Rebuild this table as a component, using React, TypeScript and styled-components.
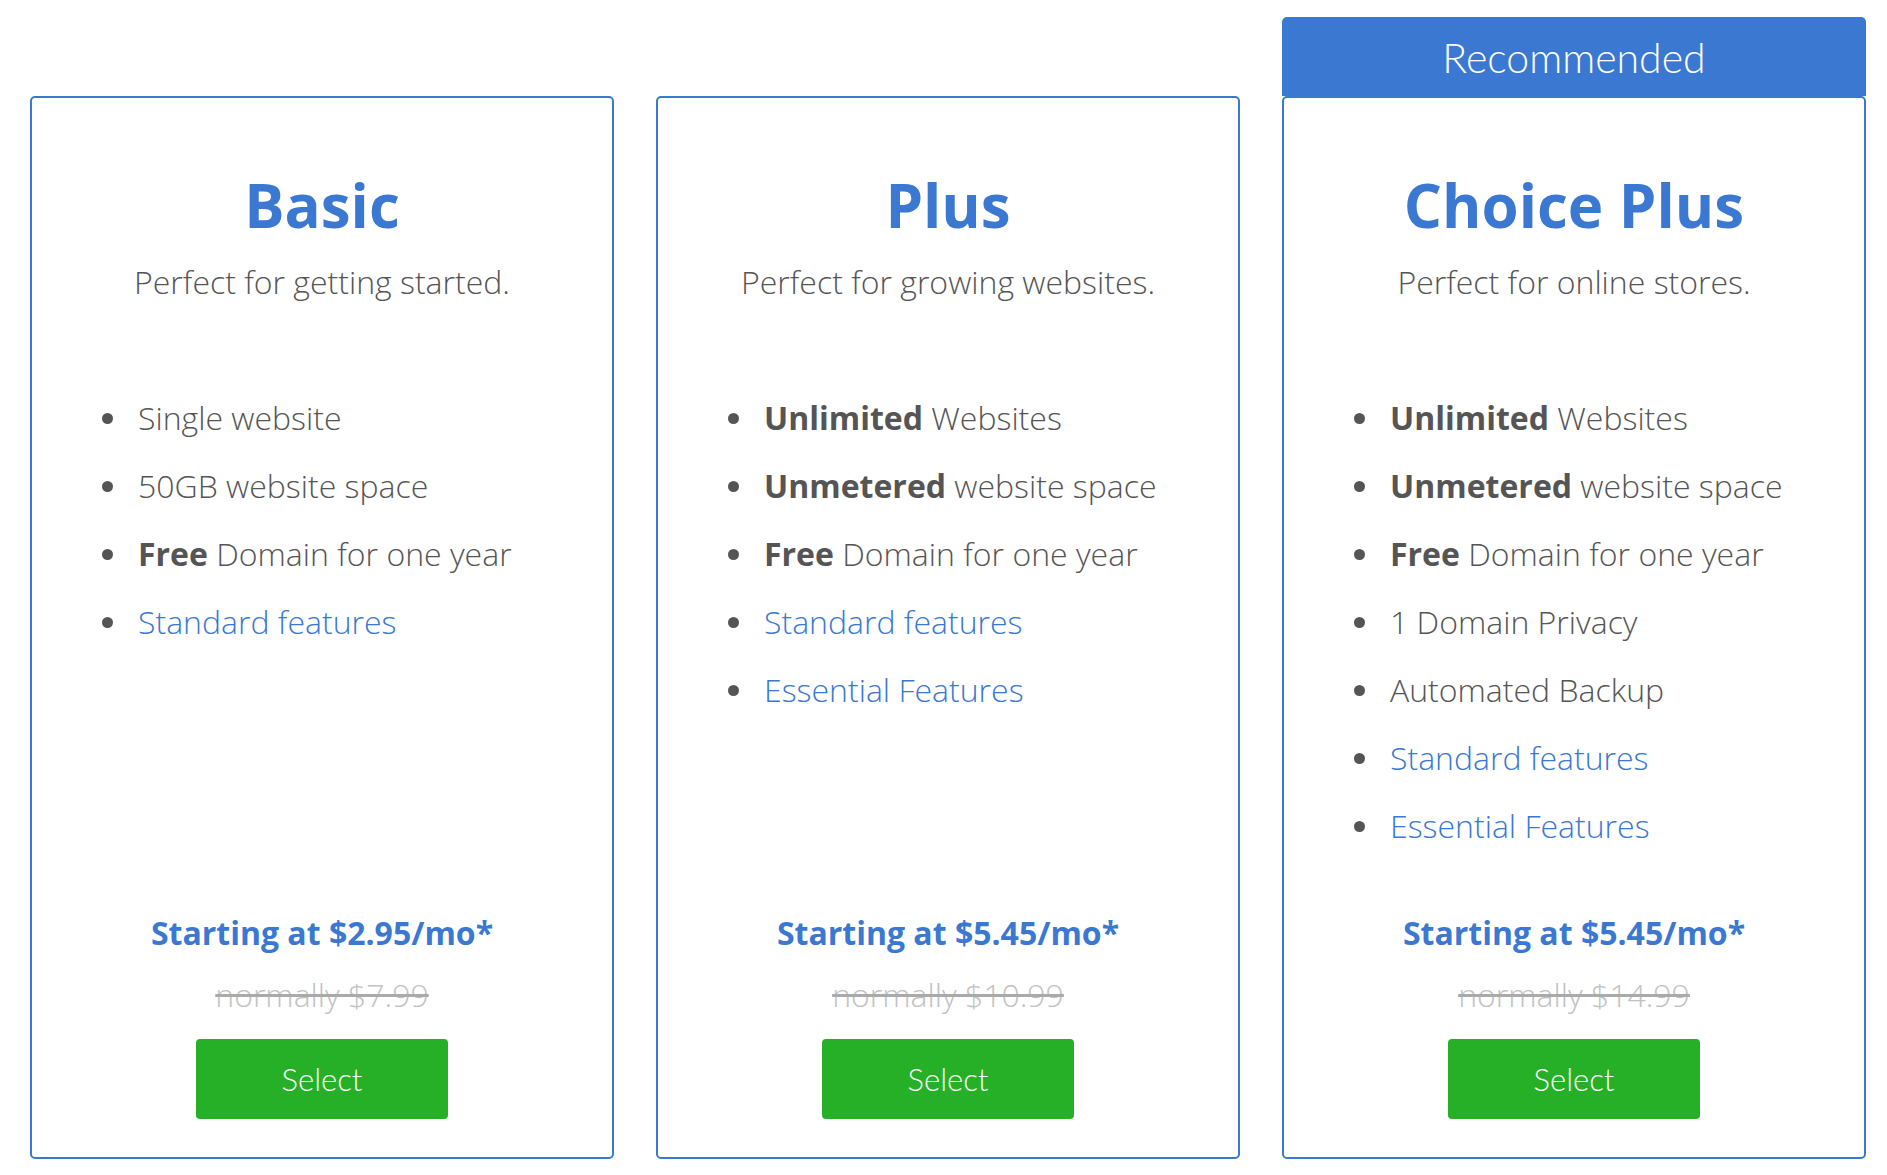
import styled, { createGlobalStyle } from 'styled-components';

const GlobalStyle = createGlobalStyle`
  body {
    margin: 0;
    background: #fff;
    font-family: 'Open Sans', 'Liberation Sans', sans-serif;
  }
`;

const BLUE = '#3a78d2';

const Page = styled.div`
  display: grid;
  grid-template-columns: repeat(3, 584px);
  grid-template-rows: auto 1fr;
  column-gap: 42px;
  padding: 17px 0 15px 30px;
`;

const Ribbon = styled.div`
  grid-column: 3;
  grid-row: 1;
  height: 79px;
  background: ${BLUE};
  border-radius: 5px 5px 0 0;
  color: #fff;
  font-family: Lato, 'Open Sans', sans-serif;
  font-weight: 300;
  font-size: 41px;
  line-height: 81px;
  text-align: center;
`;

const Card = styled.div<{ $col: number }>`
  grid-column: ${(p) => p.$col};
  grid-row: 2;
  border: 2px solid ${BLUE};
  border-radius: 5px;
  display: flex;
  flex-direction: column;
  align-items: center;
  padding: 71px 0 38px;
  background: #fff;
`;

const Title = styled.h2`
  margin: 0;
  font-size: 60px;
  line-height: 72px;
  font-weight: 700;
  color: ${BLUE};
`;

const Tagline = styled.p`
  margin: 20px 0 0;
  font-size: 32px;
  line-height: 42px;
  font-weight: 300;
  color: #555;
`;

const Features = styled.ul`
  align-self: stretch;
  list-style: none;
  margin: 81px 0 0;
  padding: 0 0 0 106px;
`;

const Feature = styled.li<{ $link?: boolean }>`
  position: relative;
  height: 68px;
  line-height: 68px;
  font-size: 32px;
  font-weight: 300;
  color: ${(p) => (p.$link ? BLUE : '#555')};

  &::before {
    content: '';
    position: absolute;
    left: -36px;
    top: 29px;
    width: 11px;
    height: 11px;
    border-radius: 50%;
    background: #555;
  }

  strong {
    font-weight: 700;
  }
`;

const Pricing = styled.div`
  margin-top: auto;
  padding-top: 53px;
  display: flex;
  flex-direction: column;
  align-items: center;
`;

const Price = styled.div`
  font-size: 32px;
  line-height: 40px;
  font-weight: 700;
  color: ${BLUE};
`;

const Normally = styled.div`
  margin-top: 22px;
  font-size: 32px;
  line-height: 40px;
  font-weight: 300;
  color: #c2c2c2;
  text-decoration: line-through;
  text-decoration-color: #aaa;
`;

const SelectButton = styled.button`
  margin-top: 24px;
  width: 252px;
  height: 80px;
  border: none;
  border-radius: 4px;
  background: #26b028;
  color: #fff;
  font-family: Lato, 'Open Sans', sans-serif;
  font-weight: 300;
  font-size: 31px;
  cursor: pointer;
`;

type Item = { bold?: string; text: string; link?: boolean };

type Plan = {
  name: string;
  tagline: string;
  items: Item[];
  price: string;
  normally: string;
};

const plans: Plan[] = [
  {
    name: 'Basic',
    tagline: 'Perfect for getting started.',
    items: [
      { text: 'Single website' },
      { text: '50GB website space' },
      { bold: 'Free', text: 'Domain for one year' },
      { text: 'Standard features', link: true },
    ],
    price: 'Starting at $2.95/mo*',
    normally: 'normally $7.99',
  },
  {
    name: 'Plus',
    tagline: 'Perfect for growing websites.',
    items: [
      { bold: 'Unlimited', text: 'Websites' },
      { bold: 'Unmetered', text: 'website space' },
      { bold: 'Free', text: 'Domain for one year' },
      { text: 'Standard features', link: true },
      { text: 'Essential Features', link: true },
    ],
    price: 'Starting at $5.45/mo*',
    normally: 'normally $10.99',
  },
  {
    name: 'Choice Plus',
    tagline: 'Perfect for online stores.',
    items: [
      { bold: 'Unlimited', text: 'Websites' },
      { bold: 'Unmetered', text: 'website space' },
      { bold: 'Free', text: 'Domain for one year' },
      { text: '1 Domain Privacy' },
      { text: 'Automated Backup' },
      { text: 'Standard features', link: true },
      { text: 'Essential Features', link: true },
    ],
    price: 'Starting at $5.45/mo*',
    normally: 'normally $14.99',
  },
];

export default function App() {
  return (
    <>
      <GlobalStyle />
      <Page>
        <Ribbon>Recommended</Ribbon>
        {plans.map((plan, i) => (
          <Card key={plan.name} $col={i + 1}>
            <Title>{plan.name}</Title>
            <Tagline>{plan.tagline}</Tagline>
            <Features>
              {plan.items.map((item, j) => (
                <Feature key={j} $link={item.link}>
                  {item.bold && <strong>{item.bold} </strong>}
                  {item.text}
                </Feature>
              ))}
            </Features>
            <Pricing>
              <Price>{plan.price}</Price>
              <Normally>{plan.normally}</Normally>
              <SelectButton>Select</SelectButton>
            </Pricing>
          </Card>
        ))}
      </Page>
    </>
  );
}
